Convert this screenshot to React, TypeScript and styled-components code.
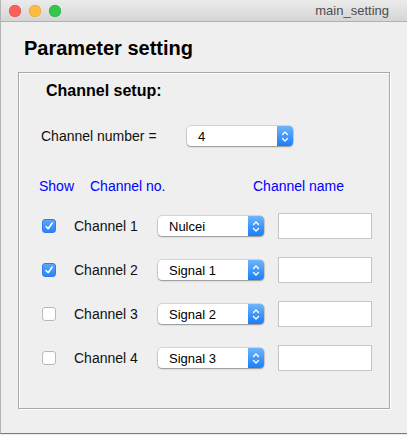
import React from 'react';
import styled, { createGlobalStyle } from 'styled-components';

const GlobalStyle = createGlobalStyle`
  html, body {
    margin: 0;
    padding: 0;
    background: #ececec;
  }
  body {
    font-family: "Liberation Sans", Arial, sans-serif;
  }
`;

const Window = styled.div`
  width: 407px;
  height: 434px;
  box-sizing: border-box;
  display: flex;
  flex-direction: column;
  background: #efefef;
  border-left: 1px solid #b4b4b4;
  border-bottom: 1px solid #7a7a7a;
  overflow: hidden;
`;

const TitleBar = styled.div`
  height: 22px;
  flex-shrink: 0;
  box-sizing: border-box;
  display: flex;
  align-items: center;
  padding: 0 18px 0 8px;
  background: linear-gradient(#ebebeb, #d5d5d5);
  border-bottom: 1px solid #b1b1b1;
`;

const Light = styled.span<{ $color: string; $edge: string }>`
  width: 12px;
  height: 12px;
  border-radius: 50%;
  background: ${(p) => p.$color};
  box-shadow: inset 0 0 0 0.5px ${(p) => p.$edge};
  margin-right: 8px;
`;

const WindowTitle = styled.span`
  margin-left: auto;
  font-size: 13px;
  color: #4d4d4d;
`;

const Content = styled.div`
  padding: 14px 0 0 17px;
`;

const Heading = styled.h1`
  margin: 0 0 0 6px;
  font-size: 20px;
  line-height: 24px;
  font-weight: bold;
  color: #000;
`;

const GroupBox = styled.div`
  margin-top: 12px;
  width: 372px;
  height: 337px;
  box-sizing: border-box;
  border: 1px solid #a8a8a8;
  box-shadow: inset 1px 1px 0 #ffffff, 1px 1px 0 #ffffff;
  padding-top: 8px;
`;

const GroupTitle = styled.div`
  margin-left: 27px;
  font-size: 16px;
  line-height: 20px;
  font-weight: bold;
  color: #000;
`;

const NumberRow = styled.div`
  margin-top: 25px;
  display: flex;
  align-items: center;
  height: 20px;
  padding-left: 22px;
`;

const Label = styled.span<{ $width?: number }>`
  font-size: 14px;
  color: #111;
  ${(p) => (p.$width ? `width: ${p.$width}px;` : '')}
`;

const Combo = styled.div<{ $width: number }>`
  width: ${(p) => p.$width}px;
  height: 20px;
  box-sizing: border-box;
  display: flex;
  align-items: center;
  background: #fff;
  border-radius: 4px;
  box-shadow: 0 0 0 0.5px rgba(0, 0, 0, 0.22), 0 1px 1.5px rgba(0, 0, 0, 0.3);
  overflow: hidden;
`;

const ComboText = styled.span`
  flex: 1;
  padding-left: 11px;
  font-size: 13px;
  color: #000;
`;

const ComboButton = styled.span`
  width: 16px;
  height: 100%;
  display: flex;
  align-items: center;
  justify-content: center;
  background: linear-gradient(#6db4fb, #1a7ef9);
`;

const HeaderRow = styled.div`
  margin-top: 31px;
  display: flex;
  height: 18px;
  align-items: center;
  padding-left: 20px;
`;

const HeaderText = styled.span<{ $width?: number }>`
  font-size: 14px;
  color: #0000ff;
  ${(p) => (p.$width ? `width: ${p.$width}px;` : '')}
`;

const Rows = styled.div`
  margin-top: 18px;
  display: flex;
  flex-direction: column;
  gap: 18px;
`;

const Row = styled.div`
  display: grid;
  grid-template-columns: 32px 84px 120px 94px;
  align-items: center;
  height: 26px;
  padding-left: 23px;
`;

const Check = styled.span<{ $checked: boolean }>`
  width: 14px;
  height: 14px;
  box-sizing: border-box;
  border-radius: 3px;
  display: flex;
  align-items: center;
  justify-content: center;
  background: ${(p) => (p.$checked ? 'linear-gradient(#5ca4fb, #2a85f8)' : '#fff')};
  border: 1px solid ${(p) => (p.$checked ? '#2f7de6' : '#b9b9b9')};
`;

const TextField = styled.div`
  width: 94px;
  height: 26px;
  box-sizing: border-box;
  background: #fff;
  border: 1px solid #c6c6c6;
`;

const Chevrons = () => (
  <svg width="8" height="13" viewBox="0 0 8 13" fill="none" stroke="#fff" strokeWidth="1.3" strokeLinecap="round" strokeLinejoin="round">
    <path d="M1.5 4.5 L4 2 L6.5 4.5" />
    <path d="M1.5 8.5 L4 11 L6.5 8.5" />
  </svg>
);

const Tick = () => (
  <svg width="10" height="10" viewBox="0 0 10 10" fill="none" stroke="#fff" strokeWidth="1.5" strokeLinecap="round" strokeLinejoin="round">
    <path d="M2 5.5 L4.2 7.8 L8.2 2" />
  </svg>
);

const channels = [
  { name: 'Channel 1', signal: 'Nulcei', checked: true },
  { name: 'Channel 2', signal: 'Signal 1', checked: true },
  { name: 'Channel 3', signal: 'Signal 2', checked: false },
  { name: 'Channel 4', signal: 'Signal 3', checked: false },
];

const App: React.FC = () => (
  <>
    <GlobalStyle />
    <Window>
      <TitleBar>
        <Light $color="#fc605b" $edge="#de4640" />
        <Light $color="#fdbc40" $edge="#de9f34" />
        <Light $color="#34c84a" $edge="#27aa35" />
        <WindowTitle>main_setting</WindowTitle>
      </TitleBar>
      <Content>
        <Heading>Parameter setting</Heading>
        <GroupBox>
          <GroupTitle>Channel setup:</GroupTitle>
          <NumberRow>
            <Label $width={146}>Channel number =</Label>
            <Combo $width={106}>
              <ComboText>4</ComboText>
              <ComboButton>
                <Chevrons />
              </ComboButton>
            </Combo>
          </NumberRow>
          <HeaderRow>
            <HeaderText $width={51}>Show</HeaderText>
            <HeaderText $width={163}>Channel no.</HeaderText>
            <HeaderText>Channel name</HeaderText>
          </HeaderRow>
          <Rows>
            {channels.map((c) => (
              <Row key={c.name}>
                <Check $checked={c.checked}>{c.checked && <Tick />}</Check>
                <Label>{c.name}</Label>
                <Combo $width={106}>
                  <ComboText>{c.signal}</ComboText>
                  <ComboButton>
                    <Chevrons />
                  </ComboButton>
                </Combo>
                <TextField />
              </Row>
            ))}
          </Rows>
        </GroupBox>
      </Content>
    </Window>
  </>
);

export default App;
